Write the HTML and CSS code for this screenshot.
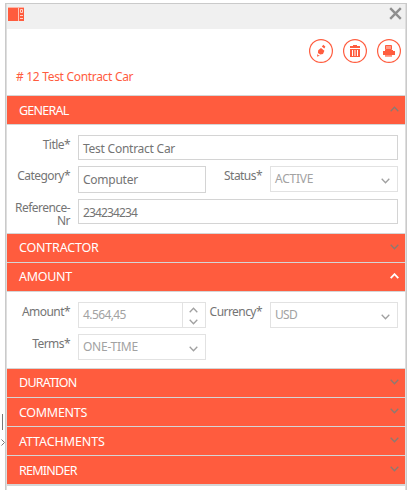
FILE: index.html
```
<!DOCTYPE html>
<html lang="en">
<head>
<meta charset="utf-8">
<title>Test Contract Car</title>
<link rel="stylesheet" href="styles.css">
</head>
<body>
<div class="splitter"><span class="splitter-bar"></span>
<svg width="4" height="7" viewBox="0 0 4 7"><path d="M.5.5l3 3-3 3"/></svg></div>
<main class="panel">
  <header class="titlebar">
    <svg class="logo" width="17" height="15" viewBox="0 0 17 15"><path d="M0 1h10v13H0zM11 1h5v13h-5z" fill="#ff5c3e"/><path d="M10.5 1v13" stroke="#ffc4b8"/><path d="M0 .5h16" stroke="#ffb5a5"/><path d="M12.5 2.5h2v3h-2zM12 8.5h3M12 11.5h3" fill="none" stroke="#ffd2c8"/></svg>
    <svg class="close" width="13" height="13" viewBox="0 0 13 13"><path d="M1.2 1.2l10.6 10.6M11.8 1.2L1.2 11.8"/></svg>
  </header>
  <div class="toolbar">
    <button class="tool" aria-label="Edit"><svg width="24" height="24" viewBox="0 0 24 24"><path d="M12.8 7.4l1.6-1.6 2 1.9-1.1 1.9zM9.2 11.2l2.8-2.2 3.4 2.8-1.4 3.3-2.7.4-2.4-1.6zM8.2 14.4l.7 1.7 2 .5-2.7 1.2z"/></svg></button>
    <button class="tool" aria-label="Delete"><svg width="24" height="24" viewBox="0 0 24 24"><path d="M10 6h4v1h3v2H7V7h3zM7 10h10v8H7z"/><path d="M9.5 11v6M12 11v6M14.5 11v6" stroke="#fff"/></svg></button>
    <button class="tool" aria-label="Print"><svg width="24" height="24" viewBox="0 0 24 24"><path d="M8.5 6.5h6v4h-6z" fill="#ff9b88" stroke="#ff5c3e"/><path d="M6 12h2v-1h8v1h2v4H6z"/><path d="M8 16h7v1.8H8z" fill="#ff8b75"/></svg></button>
  </div>
  <h1 class="title"># 12 Test Contract Car</h1>

  <section>
    <h2 class="bar low"><span class="tight">GENERAL</span><svg class="chev up" width="9" height="6" viewBox="0 0 9 6"><path d="M.7.8l3.8 4 3.8-4"/></svg></h2>
    <div class="form general">
      <label>Title*</label><div class="field wide short"><span>Test Contract Car</span></div>
      <label>Category*</label><div class="field tall"><span>Computer</span></div>
      <label>Status*</label><div class="field disabled"><span>ACTIVE</span><svg class="chev" width="9" height="6" viewBox="0 0 9 6"><path d="M.7.8l3.8 4 3.8-4"/></svg></div>
      <label class="two-line">Reference-<br>Nr</label><div class="field wide short"><span class="digits">234234234</span></div>
    </div>
  </section>
  <section><h2 class="bar"><span>CONTRACTOR</span><svg class="chev" width="9" height="6" viewBox="0 0 9 6"><path d="M.7.8l3.8 4 3.8-4"/></svg></h2></section>
  <section>
    <h2 class="bar active"><span class="snug">AMOUNT</span><svg class="chev up" width="9" height="6" viewBox="0 0 9 6"><path d="M.7.8l3.8 4 3.8-4"/></svg></h2>
    <div class="form amount">
      <label>Amount*</label><div class="field disabled number"><span class="digits">4.564,45</span><div class="spin"><svg class="chev up" width="9" height="6" viewBox="0 0 9 6"><path d="M.7.8l3.8 4 3.8-4"/></svg><svg class="chev" width="9" height="6" viewBox="0 0 9 6"><path d="M.7.8l3.8 4 3.8-4"/></svg></div></div>
      <label>Currency*</label><div class="field disabled"><span class="tight">USD</span><svg class="chev" width="9" height="6" viewBox="0 0 9 6"><path d="M.7.8l3.8 4 3.8-4"/></svg></div>
      <label>Terms*</label><div class="field disabled"><span>ONE-TIME</span><svg class="chev" width="9" height="6" viewBox="0 0 9 6"><path d="M.7.8l3.8 4 3.8-4"/></svg></div>
    </div>
  </section>
  <section><h2 class="bar"><span class="tight">DURATION</span><svg class="chev" width="9" height="6" viewBox="0 0 9 6"><path d="M.7.8l3.8 4 3.8-4"/></svg></h2></section>
  <section><h2 class="bar low"><span class="snug">COMMENTS</span><svg class="chev" width="9" height="6" viewBox="0 0 9 6"><path d="M.7.8l3.8 4 3.8-4"/></svg></h2></section>
  <section><h2 class="bar low"><span class="loose">ATTACHMENTS</span><svg class="chev" width="9" height="6" viewBox="0 0 9 6"><path d="M.7.8l3.8 4 3.8-4"/></svg></h2></section>
  <section class="last"><h2 class="bar low"><span class="tight">REMINDER</span><svg class="chev" width="9" height="6" viewBox="0 0 9 6"><path d="M.7.8l3.8 4 3.8-4"/></svg></h2></section>
</main>
</body>
</html>
```
FILE: styles.css
```
* { box-sizing: border-box; }
body {
  margin: 0;
  height: 490px;
  overflow: hidden;
  display: flex;
  background: #fff;
  color: #747474;
  font: 12px/14px "Noto Sans", "Open Sans", sans-serif;
  letter-spacing: -0.25px;
}
svg { display: block; flex: none; }
.splitter { width: 5px; padding: 414px 0 0; }
.splitter-bar { display: block; width: 1px; height: 16px; margin: 0 0 9px 2px; background: #777; }
.splitter svg { margin-left: 1px; fill: none; stroke: #777; }
.panel {
  width: 402px;
  height: 487px;
  margin-top: 3px;
  border: solid #cacaca;
  border-width: 1px 1px 0;
  box-shadow: inset 1px 0 #dedede, inset -1px 0 #dedede;
  padding: 0 1px;
}
.titlebar {
  display: flex;
  justify-content: space-between;
  height: 25px;
  padding: 3px 3px 0 1px;
  background: #f0f0f0;
}
.close { fill: none; stroke: #8e8e8e; stroke-width: 2.4; }
.toolbar { display: flex; justify-content: flex-end; gap: 10px; padding: 10px 4px 0 0; }
.tool {
  width: 24px;
  height: 24px;
  padding: 0;
  border: 0;
  border-radius: 50%;
  background: none;
  box-shadow: inset 0 0 0 1.2px #ff5c3e;
  fill: #ff5c3e;
}
.title {
  height: 32px;
  margin: 0;
  padding: 7px 9px 0;
  color: #ff5c3e;
  font-size: 12px;
  font-weight: 400;
  letter-spacing: -0.31px;
}
section { border-top: 1px solid #d5d5d5; }
.last { border-bottom: 2px solid #d5d5d5; }
.bar {
  display: flex;
  align-items: center;
  justify-content: space-between;
  height: 28px;
  margin: 0;
  padding: 0 6px 0 12px;
  background: #ff5c3e;
  color: #fff;
  font-size: 12.5px;
  font-weight: 400;
  letter-spacing: -0.2px;
}
.low { padding-top: 2px; }
.snug { letter-spacing: -0.3px; }
.tight { letter-spacing: -0.65px; }
.bar .tight { letter-spacing: -0.75px; }
.loose { letter-spacing: -0.1px; }
.digits { letter-spacing: -0.85px; }
.number .digits { letter-spacing: -0.6px; }
.chev { fill: none; stroke: #8b7b72; stroke-width: 1.3; }
.up { transform: scaleY(-1); }
.bar .chev { margin-top: -3px; }
.low .chev { margin-top: -5px; }
.active .chev { stroke: #fff; stroke-width: 1.8; }
.form {
  display: grid;
  grid-template-columns: 71px 128px 64px 128px;
  border-top: 1px solid #d5d5d5;
  padding: 10px 0 0;
}
.form label {
  padding: 3px 8px 0 0;
  text-align: right;
  letter-spacing: -0.55px;
}
.general { grid-template-rows: 31px 33px 34px; height: 109px; }
.amount { grid-template-rows: 32px 32px; height: 77px; }
.field {
  display: flex;
  align-items: center;
  justify-content: space-between;
  height: 26px;
  padding: 0 7px 0 4px;
  border: 1px solid #d4d4d4;
}
.wide { grid-column: 2 / -1; }
.short { height: 25px; padding-top: 2px; }
.tall { height: 27px; padding-top: 1px; }
.disabled { border-color: #e2e2e2; color: #a2a2a2; }
.disabled .chev { stroke: #a0a0a0; margin-top: 4px; }
.number { padding-right: 0; }
.spin { width: 23px; height: 24px; border-left: 1px solid #e2e2e2; padding: 4px 6px; }
.disabled .spin .chev { margin: 0 0 6px; }
.form .two-line { padding-top: 2px; line-height: 13px; }
```
